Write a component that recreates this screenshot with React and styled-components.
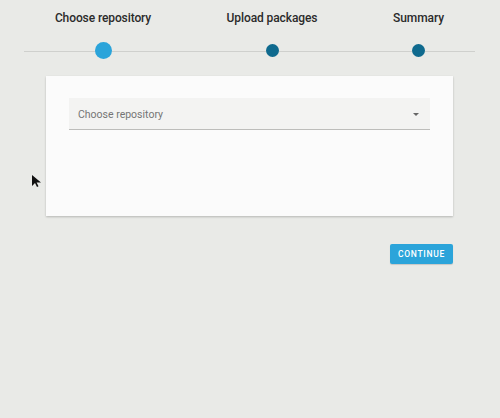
import React from 'react'
import styled, { createGlobalStyle } from 'styled-components'

const Global = createGlobalStyle`
  html, body { margin: 0; padding: 0; }
  body {
    background: #e9eae7;
    font-family: Roboto, "Liberation Sans", sans-serif;
    width: 500px;
    height: 418px;
    overflow: hidden;
  }
`

const steps = [
  { label: 'Choose repository', width: 158, active: true },
  { label: 'Upload packages', width: 180 },
  { label: 'Summary', width: 113 },
]

const App = () => {
  return (
    <Page>
      <Global />
      <Stepper>
        {steps.map((s) => (
          <Step key={s.label} w={s.width}>
            <Label>{s.label}</Label>
            <Dot active={s.active} />
          </Step>
        ))}
      </Stepper>
      <Card>
        <Select>
          <span>Choose repository</span>
          <Caret />
        </Select>
      </Card>
      <Actions>
        <Button>Continue</Button>
      </Actions>
      <Cursor viewBox="0 0 10 12">
        <path d="M0 0 L0 11 L3 8 L5 12 L6.5 11.3 L4.6 7.5 L9 7.5 Z" fill="#111" />
      </Cursor>
    </Page>
  )
}

export default App

const Page = styled.div`
  position: relative;
  width: 500px;
  height: 418px;
  padding-top: 11px;
  box-sizing: border-box;
`
const Stepper = styled.div`
  position: relative;
  display: flex;
  margin: 0 25px 0 24px;
  &::before {
    content: '';
    position: absolute;
    left: 0;
    right: 0;
    top: 40px;
    border-top: 1px solid #cfd0cd;
  }
`
const Step = styled.div`
  width: ${({ w }) => w}px;
  display: flex;
  flex-direction: column;
  align-items: center;
  position: relative;
`
const Label = styled.div`
  font-size: 12px;
  font-weight: 500;
  color: #2b2b2b;
  height: 14px;
  line-height: 14px;
  letter-spacing: -0.1px;
`
const Dot = styled.div`
  margin-top: ${({ active }) => (active ? 17 : 19)}px;
  width: ${({ active }) => (active ? 17 : 13)}px;
  height: ${({ active }) => (active ? 17 : 13)}px;
  border-radius: 50%;
  background: ${({ active }) => (active ? '#2ba4da' : '#0f6a8e')};
`
const Card = styled.div`
  margin: 17px 47px 0 46px;
  height: 140px;
  background: #fbfbfb;
  box-shadow: 0 1px 2px rgba(0, 0, 0, 0.22);
  padding: 22px 23px 0 23px;
  box-sizing: border-box;
`
const Select = styled.div`
  height: 31px;
  background: #f3f3f2;
  border-bottom: 1px solid #bdbdbb;
  display: flex;
  align-items: center;
  justify-content: space-between;
  padding: 2px 11px 0 9px;
  box-sizing: border-box;
  height: 32px;
  span {
    font-size: 10.5px;
    color: #757575;
  }
`
const Caret = styled.div`
  width: 0;
  height: 0;
  border-left: 3.5px solid transparent;
  border-right: 3.5px solid transparent;
  border-top: 3.5px solid #666;
`
const Actions = styled.div`
  display: flex;
  justify-content: flex-end;
  margin: 28px 47px 0 0;
`
const Button = styled.button`
  width: 63px;
  height: 20px;
  border: 0;
  border-radius: 2px;
  background: #2ba4da;
  color: #fff;
  font-family: Roboto, "Liberation Sans", sans-serif;
  font-size: 8.5px;
  font-weight: 500;
  letter-spacing: 0.7px;
  text-transform: uppercase;
  padding: 0;
  box-shadow: 0 1px 1px rgba(0, 0, 0, 0.15);
`
const Cursor = styled.svg`
  position: absolute;
  left: 32px;
  top: 175px;
  width: 10px;
  height: 12px;
`
